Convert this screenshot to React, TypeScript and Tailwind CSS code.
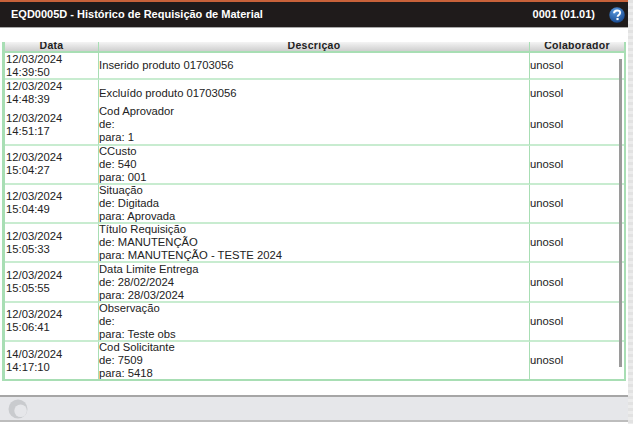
import { Fragment } from 'react';

interface Linha {
  data: string;
  hora: string;
  descricao: string[];
  semBorda?: boolean;
}

const linhas: Linha[] = [
  { data: '12/03/2024', hora: '14:39:50', descricao: ['Inserido produto 01703056'] },
  { data: '12/03/2024', hora: '14:48:39', descricao: ['Excluído produto 01703056'], semBorda: true },
  { data: '12/03/2024', hora: '14:51:17', descricao: ['Cod Aprovador', 'de:', 'para: 1'] },
  { data: '12/03/2024', hora: '15:04:27', descricao: ['CCusto', 'de: 540', 'para: 001'] },
  { data: '12/03/2024', hora: '15:04:49', descricao: ['Situação', 'de: Digitada', 'para: Aprovada'] },
  { data: '12/03/2024', hora: '15:05:33', descricao: ['Título Requisição', 'de: MANUTENÇÃO', 'para: MANUTENÇÃO - TESTE 2024'] },
  { data: '12/03/2024', hora: '15:05:55', descricao: ['Data Limite Entrega', 'de: 28/02/2024', 'para: 28/03/2024'] },
  { data: '12/03/2024', hora: '15:06:41', descricao: ['Observação', 'de:', 'para: Teste obs'] },
  { data: '14/03/2024', hora: '14:17:10', descricao: ['Cod Solicitante', 'de: 7509', 'para: 5418'], semBorda: true },
];

function IconeAjuda() {
  return (
    <svg width="16" height="16" viewBox="0 0 20 20">
      <defs>
        <radialGradient id="ajuda" cx="0.4" cy="0.25" r="0.85">
          <stop offset="0" stopColor="#5b9be0" />
          <stop offset="1" stopColor="#0f3f86" />
        </radialGradient>
      </defs>
      <circle cx="10" cy="10" r="9.7" fill="url(#ajuda)" />
      <path d="M6.300 7.800c.2-2.300 1.800-3.500 3.900-3.500 2.200 0 3.700 1.200 3.700 3 0 2.600-3.100 2.700-3.100 5" fill="none" stroke="#fff" strokeWidth="2.500" />
      <rect x="9.300" y="13.700" width="2.700" height="2.700" fill="#fff" />
    </svg>
  );
}

function Spinner() {
  return (
    <svg width="20" height="20" viewBox="0 0 20 20">
      <circle cx="10" cy="10" r="9.500" fill="#c9cbce" />
      <circle cx="12.600" cy="11.800" r="6.300" fill="#e6e7ea" />
    </svg>
  );
}

export default function App() {
  return (
    <div className="h-[424px] w-[633px] overflow-hidden bg-white font-['Liberation_Sans',Arial,sans-serif] text-[11.250px] leading-[13px] text-[#222] flex">
      <div className="flex-1 min-w-0 flex flex-col">
        {/* Barra de título */}
        <div className="h-[28px] shrink-0 border-t-2 border-b border-t-[#c8623a] border-b-[#a9a9a9] bg-[#1f1b1b] text-white font-bold text-[11px] flex items-center pl-[11px] pr-[3px] justify-between">
          <span>EQD0005D - Histórico de Requisição de Material</span>
          <div className="flex items-center gap-[14px]">
            <span>0001 (01.01)</span>
            <IconeAjuda />
          </div>
        </div>

        {/* Tabela */}
        <div className="relative mt-[14px] ml-[2px] mr-[2px] border-l-[3px] border-r-2 border-b-2 border-[#a8deb4]">
          <div className="grid grid-cols-[94px_431px_1fr] h-[11px] overflow-hidden border-b-2 border-[#a8deb4] bg-gradient-to-b from-[#f4f4f4] to-[#cfcfcf] font-bold text-[10.500px] text-[#222]">
            <div className="text-center border-r border-[#a8deb4] -mt-[3px] tracking-[0.3px]">Data</div>
            <div className="text-center border-r border-[#a8deb4] -mt-[3px] tracking-[0.3px]">Descrição</div>
            <div className="text-center -mt-[3px] tracking-[0.3px]">Colaborador</div>
          </div>
          <div className="grid grid-cols-[94px_431px_1fr] grid-rows-[27px_26px_39.500px_39.300px_39.300px_39.300px_39.300px_39.300px_37.500px]">
            {linhas.map((l, i) => (
              <Fragment key={i}>
                <div className={`flex flex-col justify-center pl-[1px] border-r border-r-[#a8deb4] ${l.semBorda ? '' : 'border-b-2 border-b-[#c8ecd0]'}`}>
                  <span>{l.data}</span>
                  <span>{l.hora}</span>
                </div>
                <div className={`flex flex-col justify-center border-r border-r-[#a8deb4] ${l.semBorda ? '' : 'border-b-2 border-b-[#c8ecd0]'}`}>
                  {l.descricao.map((t, j) => (
                    <span key={j}>{t}</span>
                  ))}
                </div>
                <div className={`flex items-center ${l.semBorda ? '' : 'border-b-2 border-b-[#c8ecd0]'}`}>unosol</div>
              </Fragment>
            ))}
          </div>
          {/* Barra de rolagem */}
          <div className="absolute top-[17px] right-[2px] bottom-[12px] w-[3px] bg-[#9a9a9a]" />
        </div>
        <div className="flex-1" />

        {/* Rodapé */}
        <div className="h-[27px] mb-[2px] shrink-0 border-t-2 border-b-2 border-t-[#a6a6a6] border-b-[#bdbdbd] bg-[#e6e7ea] flex items-center pl-[8px]">
          <Spinner />
        </div>
      </div>
      <div className="w-[5px] shrink-0 bg-[repeating-linear-gradient(180deg,#e2e2e2_0px,#e2e2e2_3px,#ececec_3px,#ececec_6px)]" />
    </div>
  );
}
